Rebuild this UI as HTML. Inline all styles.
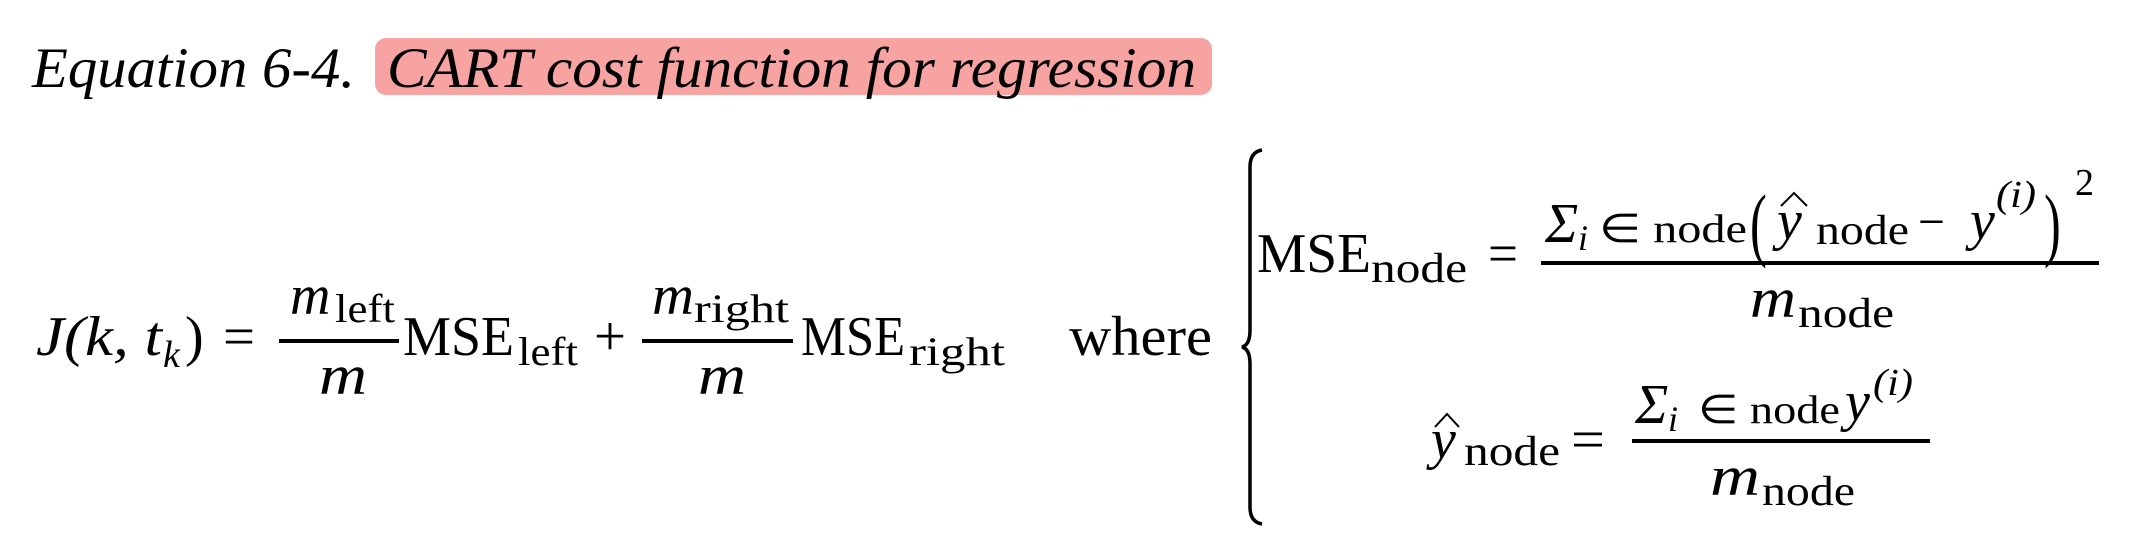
<!DOCTYPE html>
<html><head><meta charset="utf-8"><style>
html,body{margin:0;padding:0;background:#fff;width:2137px;height:549px;overflow:hidden}
svg{display:block}
text{font-family:"Liberation Serif",serif;fill:#000}
.i{font-style:italic}
</style></head><body>
<svg width="2137" height="549" viewBox="0 0 2137 549" xmlns="http://www.w3.org/2000/svg">
<rect x="375" y="38" width="837" height="57" rx="11" fill="#f6a3a2"/>
<text class="i" x="32" y="87" font-size="57" textLength="323" lengthAdjust="spacingAndGlyphs">Equation 6-4.</text>
<text class="i" x="387" y="87" font-size="57" textLength="809" lengthAdjust="spacingAndGlyphs">CART cost function for regression</text>

<g transform="translate(0,22)">
<text class="i" x="36" y="333" font-size="56" textLength="126" lengthAdjust="spacingAndGlyphs">J(k, t</text>
<text class="i" x="163" y="345" font-size="38">k</text>
<text x="185" y="333" font-size="56">)</text>
<text x="223" y="333" font-size="56" textLength="32" lengthAdjust="spacingAndGlyphs">=</text>
<rect x="279" y="317" width="120" height="4"/>
<text class="i" x="290" y="292" font-size="56">m</text>
<text x="335" y="300" font-size="40" textLength="60" lengthAdjust="spacingAndGlyphs">left</text>
<text class="i" x="319" y="372" font-size="56" textLength="48" lengthAdjust="spacingAndGlyphs">m</text>
<text x="403" y="333" font-size="56" textLength="111" lengthAdjust="spacingAndGlyphs">MSE</text>
<text x="518" y="343" font-size="40" textLength="60" lengthAdjust="spacingAndGlyphs">left</text>
<text x="594" y="333" font-size="56" textLength="32" lengthAdjust="spacingAndGlyphs">+</text>
<rect x="642" y="317" width="151" height="4"/>
<text class="i" x="652" y="292" font-size="56" textLength="42" lengthAdjust="spacingAndGlyphs">m</text>
<text x="694" y="300" font-size="40" textLength="95" lengthAdjust="spacingAndGlyphs">right</text>
<text class="i" x="698" y="372" font-size="56" textLength="48" lengthAdjust="spacingAndGlyphs">m</text>
<text x="801" y="333" font-size="56" textLength="104" lengthAdjust="spacingAndGlyphs">MSE</text>
<text x="909" y="343" font-size="40" textLength="96" lengthAdjust="spacingAndGlyphs">right</text>
<text x="1069" y="333" font-size="56" textLength="143" lengthAdjust="spacingAndGlyphs">where</text>
</g>

<path d="M1262 150 Q1250 152 1250 167 L1250 330 Q1250 345 1242 347 Q1250 349 1250 364 L1250 507 Q1250 522 1262 524" fill="none" stroke="#000" stroke-width="3.5"/>

<text x="1257" y="272" font-size="56" textLength="114" lengthAdjust="spacingAndGlyphs">MSE</text>
<text x="1371" y="282" font-size="42" textLength="96" lengthAdjust="spacingAndGlyphs">node</text>
<text x="1488" y="272" font-size="56" textLength="30" lengthAdjust="spacingAndGlyphs">=</text>
<rect x="1541" y="261" width="558" height="4"/>
<g transform="translate(0,7)">
<text class="i" x="1545" y="235" font-size="56">Σ</text>
<text class="i" x="1578" y="243" font-size="36">i</text>
<text x="1599" y="235" font-size="40" textLength="148" lengthAdjust="spacingAndGlyphs">∈ node</text>
<text x="0" y="0" font-size="56" transform="translate(1750 244) scale(0.9 1.45)">(</text>
<text class="i" x="1777" y="232" font-size="56">y</text>
<path d="M1781 199 L1794 186 L1807 199" fill="none" stroke="#000" stroke-width="2"/>
<text x="1816" y="237" font-size="42" textLength="93" lengthAdjust="spacingAndGlyphs">node</text>
<text x="1918" y="232" font-size="52" textLength="27" lengthAdjust="spacingAndGlyphs">−</text>
<text class="i" x="1970" y="232" font-size="56">y</text>
<text class="i" x="1996" y="200" font-size="38" textLength="40" lengthAdjust="spacingAndGlyphs">(i)</text>
<text x="0" y="0" font-size="56" transform="translate(2044 244) scale(0.9 1.45)">)</text>
<text x="2075" y="188" font-size="38">2</text>
</g>
<g transform="translate(0,10)">
<text class="i" x="1750" y="307" font-size="56" textLength="46" lengthAdjust="spacingAndGlyphs">m</text>
<text x="1798" y="317" font-size="42" textLength="96" lengthAdjust="spacingAndGlyphs">node</text>
</g>

<g transform="translate(0,-5)">
<text class="i" x="1431" y="463" font-size="56">y</text>
<path d="M1435 432 L1447 419 L1459 432" fill="none" stroke="#000" stroke-width="2"/>
<text x="1464" y="470" font-size="42" textLength="96" lengthAdjust="spacingAndGlyphs">node</text>
<text x="1571" y="463" font-size="56" textLength="34" lengthAdjust="spacingAndGlyphs">=</text>
<rect x="1632" y="444" width="298" height="4"/>
<text class="i" x="1635" y="428" font-size="56">Σ</text>
<text class="i" x="1668" y="436" font-size="36">i</text>
<text x="1698" y="428" font-size="40" textLength="142" lengthAdjust="spacingAndGlyphs">∈ node</text>
<text class="i" x="1845" y="425" font-size="56">y</text>
<text class="i" x="1873" y="400" font-size="38" textLength="40" lengthAdjust="spacingAndGlyphs">(i)</text>
<text class="i" x="1710" y="500" font-size="56" textLength="50" lengthAdjust="spacingAndGlyphs">m</text>
<text x="1762" y="510" font-size="42" textLength="93" lengthAdjust="spacingAndGlyphs">node</text>
</g>
</svg>
</body></html>
